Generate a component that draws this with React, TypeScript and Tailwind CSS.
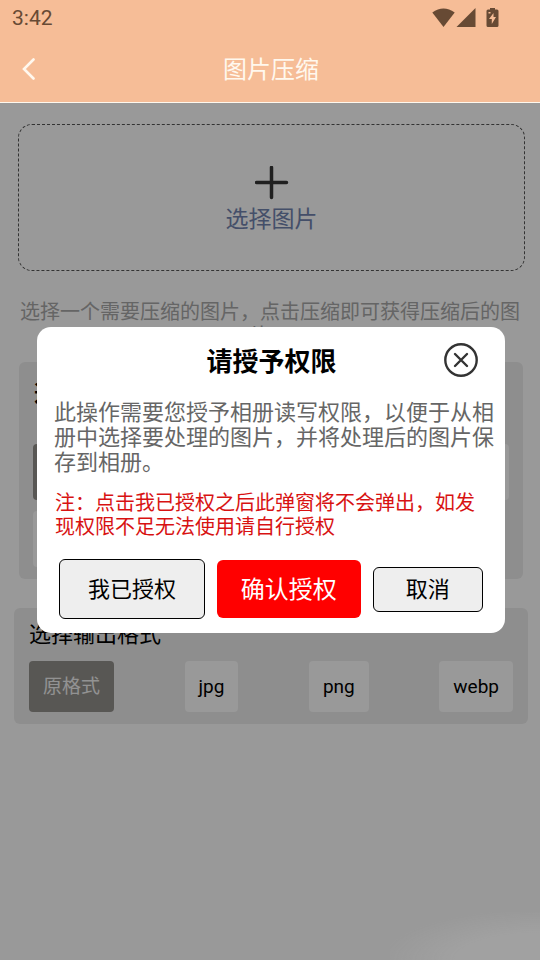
import { useState } from "react";

const formats = ["原格式", "jpg", "png", "webp"];

function Choice({ label, selected, onSelect }: { label: string; selected: boolean; onSelect: () => void }) {
  return (
    <button
      type="button"
      aria-pressed={selected}
      onClick={onSelect}
      className={`h-[51px] rounded px-[14px] pt-[2px] ${selected ? "bg-[#93918c] text-[#f4f4f4]" : "bg-white text-black"}`}
    >
      {label}
    </button>
  );
}

function StatusBar() {
  return (
    <div className="flex h-9 items-center justify-between pl-3 pr-[41px] text-[#674a34]">
      <span className="pt-[2px] text-[21px]">3:42</span>
      <div className="flex items-center">
        <svg width="24" height="20" viewBox="0 0 24 20" fill="currentColor" aria-hidden="true">
          <path d="M.3 4.500Q11.500-3.500 22.700 4.500L11.500 19Z" />
        </svg>
        <svg width="20" height="20" viewBox="0 0 20 20" fill="currentColor" aria-hidden="true">
          <path d="M19.500 0V19H.5Z" />
        </svg>
        <svg className="ml-[10px]" width="13" height="20" viewBox="0 0 13 20" fill="currentColor" aria-hidden="true">
          <path fillRule="evenodd" d="M4 0h5v1.500h2a1.500 1.500 0 0 1 1.500 1.500v14.500A1.500 1.500 0 0 1 11 19H2a1.500 1.500 0 0 1-1.500-1.500v-14.500A1.500 1.500 0 0 1 2 1.500h2ZM7.500 5L3 11h2.800V16L10 9H7.500ZM2.500 4v1.500h2V4Z" />
        </svg>
      </div>
    </div>
  );
}

export default function App() {
  const [open, setOpen] = useState(true);
  const [format, setFormat] = useState("原格式");

  return (
    <div className="flex min-h-screen flex-col bg-white font-[Roboto,'Noto_Sans_CJK_SC',sans-serif]">
      <header className="relative z-20 border-b border-[#fff8ee] bg-[#f6bd97]">
        <StatusBar />
        <div className="grid h-[66px] grid-cols-[60px_1fr_58px] items-center text-[#fff8ee]">
          <button type="button" aria-label="返回" className="flex h-full items-center pl-[21px]">
            <svg width="16" height="22" viewBox="0 0 16 22" fill="none" stroke="currentColor" strokeWidth="2.600" strokeLinecap="round" aria-hidden="true">
              <path d="M12.500 1.500L3 11l9.500 9.500" />
            </svg>
          </button>
          <h1 className="pt-[2px] text-center text-2xl">图片压缩</h1>
        </div>
      </header>

      <main className="flex flex-1 flex-col">
        <button
          type="button"
          className="ml-[18px] mr-[15px] mt-[21px] flex h-[147px] flex-col items-center justify-center gap-1 rounded-[14px] border border-dashed border-[#555] pt-[6px] text-[23px] leading-8 text-[#7284b0]"
        >
          <svg width="34" height="34" viewBox="0 0 34 34" stroke="#363636" strokeWidth="3.500" strokeLinecap="round" aria-hidden="true">
            <path d="M16.500 1.500v30M1.500 16.500h30" />
          </svg>
          选择图片
        </button>
        <p className="mx-[18px] mt-[29px] text-center text-xl leading-6 text-[#a8a8a8]">
          选择一个需要压缩的图片，点击压缩即可获得压缩后的图片。
        </p>

        <section className="ml-[19px] mr-[17px] mt-[14px] rounded-md bg-[#ededed] px-[14px] pb-3">
          <h2 className="flex h-[82px] items-center pb-5 pl-px text-[22px] font-bold">选择压缩质量</h2>
          <div className="flex justify-between">
            <button type="button" aria-label="原质量" aria-pressed="true" className="h-14 w-20 rounded bg-[#93918c]" />
            <button type="button" aria-label="高" aria-pressed="false" className="h-14 w-20 rounded bg-white" />
            <button type="button" aria-label="中" aria-pressed="false" className="h-14 w-20 rounded bg-white" />
            <button type="button" aria-label="低" aria-pressed="false" className="h-14 w-20 rounded bg-white" />
          </div>
          <button type="button" aria-label="自定义" aria-pressed="false" className="mt-[11px] block h-14 w-20 rounded bg-white" />
        </section>

        <section className="ml-[14px] mr-3 mt-[29px] rounded-md bg-[#ededed] px-[15px] pb-3">
          <h2 className="flex h-[53px] items-center text-[22px]">选择输出格式</h2>
          <div className="flex justify-between text-[19px]">
            {formats.map((f) => (
              <Choice key={f} label={f} selected={format === f} onSelect={() => setFormat(f)} />
            ))}
          </div>
        </section>
      </main>

      {open && (
        <div className="fixed inset-0 z-10 flex items-center bg-black/40 pl-[37px] pr-[35px]">
          <div className="absolute bottom-0 right-0 h-12 w-[150px] bg-[radial-gradient(ellipse_at_bottom_right,rgba(255,255,255,0.08)_40%,transparent_75%)]" />
          <div role="dialog" aria-modal="true" aria-labelledby="permission-title" className="relative flex-1 rounded-[14px] bg-white pb-[14px]">
            <div className="grid h-[66px] grid-cols-[62px_1fr_61px] items-center">
              <h2 id="permission-title" className="col-start-2 pt-1 text-center text-[26px] font-bold">请授予权限</h2>
              <button type="button" aria-label="关闭" onClick={() => setOpen(false)} className="w-[34px]">
                <svg width="34" height="34" viewBox="0 0 34 34" fill="none" stroke="#333" strokeWidth="2.400" strokeLinecap="round" aria-hidden="true">
                  <circle cx="17" cy="17" r="15.700" />
                  <path d="M11 11l12 12M23 11L11 23" />
                </svg>
              </button>
            </div>
            <p className="mt-[7px] pl-[17px] pr-2 text-[22px] leading-[25px] text-[#666]">
              此操作需要您授予相册读写权限，以便于从相册中选择要处理的图片，并将处理后的图片保存到相册。
            </p>
            <p className="mt-4 px-[18px] text-xl leading-6 text-[#d81212]">
              注：点击我已授权之后此弹窗将不会弹出，如发现权限不足无法使用请自行授权
            </p>
            <div className="mt-5 flex items-center gap-3 px-[22px]">
              <button type="button" onClick={() => setOpen(false)} className="h-[60px] flex-[146] rounded-md border border-black bg-[#eee] text-[22px]">我已授权</button>
              <button type="button" onClick={() => setOpen(false)} className="h-[58px] flex-[146] rounded-md bg-[#f00] pt-[2px] text-2xl text-white">确认授权</button>
              <button type="button" onClick={() => setOpen(false)} className="h-[45px] flex-[110] rounded-md border border-black bg-[#eee] text-[22px]">取消</button>
            </div>
          </div>
        </div>
      )}
    </div>
  );
}
